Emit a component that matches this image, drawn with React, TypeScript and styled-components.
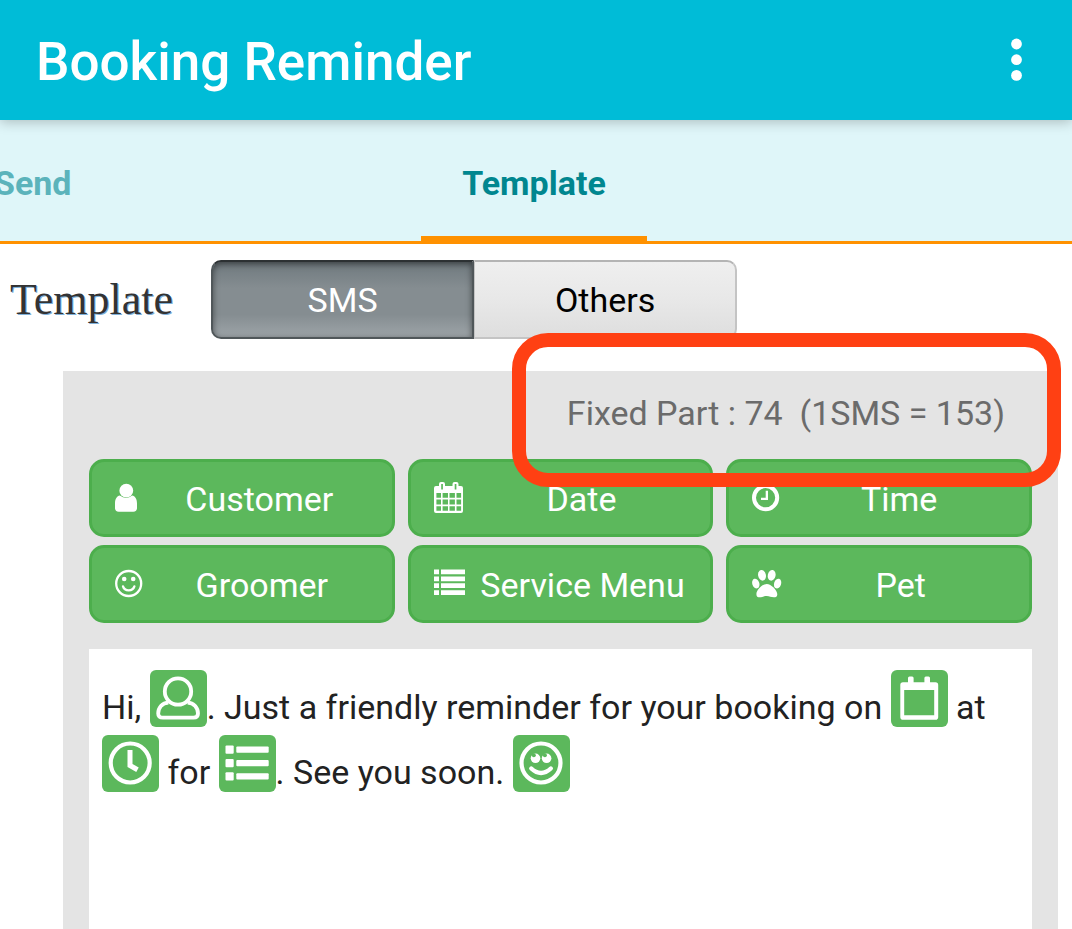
import React, { useState } from "react";
import styled, { createGlobalStyle } from "styled-components";

const GlobalStyle = createGlobalStyle`
  * { box-sizing: border-box; }
  body {
    margin: 0;
    background: #fff;
    font-family: Roboto, "Liberation Sans", sans-serif;
    font-size: 34px;
    line-height: 40px;
    overflow-x: hidden;
  }
  button { font: inherit; cursor: pointer; }
`;

const Page = styled.div`
  min-height: 100vh;
  display: flex;
  flex-direction: column;
`;

const AppBar = styled.header`
  position: relative;
  display: flex;
  align-items: center;
  justify-content: space-between;
  height: 120px;
  padding: 0 36px;
  background: #00bcd7;
  color: #fff;
  box-shadow: 0 2px 12px rgba(0, 0, 0, 0.24);
`;

const Title = styled.h1`
  margin: 0;
  padding-top: 4px;
  font-size: 53px;
  line-height: 64px;
  font-weight: 500;
`;

const MoreButton = styled.button`
  display: flex;
  padding: 0;
  border: 0;
  background: none;
  color: inherit;
`;

const Tabs = styled.nav`
  display: grid;
  grid-template-columns: 1fr auto 1fr;
  height: 124px;
  padding-right: 4px;
  border-bottom: 3px solid #ff9100;
  background: #dff6f9;
`;

const Tab = styled.a<{ $active?: boolean }>`
  display: flex;
  align-items: center;
  justify-content: center;
  height: 124px;
  padding: 10px 41px 0;
  border-bottom: 8px solid ${(p) => (p.$active ? "#ff9100" : "transparent")};
  color: ${(p) => (p.$active ? "#00868f" : "#5bb3bb")};
  font-weight: 700;
  text-decoration: none;
`;

const ScrolledTab = styled(Tab)`
  justify-self: start;
  margin-left: -47px;
`;

const TemplateRow = styled.div`
  display: flex;
  align-items: center;
  gap: 38px;
  padding: 16px 10px 0;
`;

const SectionTitle = styled.h2`
  margin: 0;
  font-family: "Liberation Serif", serif;
  font-size: 44px;
  line-height: 48px;
  font-weight: 400;
  color: #333;
  text-shadow: 1px 1px 0 #7fb0d8;
`;

const Segmented = styled.div`
  display: flex;
`;

const Segment = styled.button<{ $active: boolean }>`
  width: 263px;
  height: 79px;
  padding: 0;
  border: 2px solid ${(p) => (p.$active ? "#50575a" : "#c4c4c4")};
  border-top-color: ${(p) => (p.$active ? "#2c3133" : "#b4b4b4")};
  color: ${(p) => (p.$active ? "#fff" : "#000")};
  background: ${(p) =>
    p.$active
      ? "linear-gradient(#6f797e, #858d91 35%, #858d91 70%, #9da4a8)"
      : "linear-gradient(#efefef, #e8e8e8 50%, #dedede)"};
  box-shadow: ${(p) => (p.$active ? "inset 0 2px 6px rgba(0, 0, 0, 0.5)" : "none")};
  &:first-child { border-radius: 10px 0 0 10px; }
  &:last-child { border-radius: 0 10px 10px 0; border-left-width: 1px; }
`;

const Panel = styled.main`
  flex: 1;
  display: flex;
  flex-direction: column;
  margin: 32px 14px 0 63px;
  padding: 0 26px;
  background: #e4e4e4;
`;

const CountRow = styled.div`
  position: relative;
  display: flex;
  justify-content: flex-end;
  height: 88px;
  padding: 22px 27px 0 0;
  color: #6b6b6b;
  white-space: pre;
`;

const Highlight = styled.div`
  position: absolute;
  top: -38px;
  right: -29px;
  width: 549px;
  height: 154px;
  border: 14px solid #ff4013;
  border-radius: 36px;
  pointer-events: none;
`;

const FieldGrid = styled.div`
  display: grid;
  grid-template-columns: repeat(3, 1fr);
  gap: 8px 13px;
`;

const FieldButton = styled.button`
  display: flex;
  align-items: center;
  height: 78px;
  padding: 0 12px 0 23px;
  border: 3px solid #4cae4c;
  border-radius: 15px;
  background: #5cb85c;
  color: #fff;
  white-space: nowrap;
  svg { flex: none; }
  span { flex: 1; padding-top: 2px; text-align: center; }
`;

const Editor = styled.div`
  flex: 1;
  margin-top: 26px;
  padding: 17px 13px;
  background: #fff;
  color: #222;
  outline: none;
`;

const Chip = styled.span`
  display: inline-block;
  width: 57px;
  height: 57px;
  margin: 4px 0;
  vertical-align: -12px;
  border-radius: 6px;
  background: #5cb85c;
  color: #fff;
  svg { display: block; }
`;

type IconProps = { width: number; children: React.ReactNode };

const FieldIcon = ({ width, children }: IconProps) => (
  <svg width={width} height="34" viewBox={`0 0 ${width} 34`} fill="currentColor" aria-hidden="true">
    {children}
  </svg>
);

const ChipIcon = ({ label, children }: { label: string; children: React.ReactNode }) => (
  <Chip contentEditable={false} role="img" aria-label={label}>
    <svg width="57" height="57" viewBox="0 0 57 57" fill="currentColor">
      {children}
    </svg>
  </Chip>
);

const UserIcon = () => (
  <FieldIcon width={24}>
    <circle cx="11.3" cy="9.7" r="6.9" />
    <path d="M4.8 14.600C2 15.200 0 17.900 0 22.400v4.500q0 3.800 3.800 3.800h14.400q3.800 0 3.800-3.800v-4.500c0-4.500-2-7.200-4.800-7.800Q11.200 19.200 4.800 14.600z" />
  </FieldIcon>
);

const CalendarIcon = () => (
  <FieldIcon width={31}>
    <path
      fillRule="evenodd"
      d="M2 5H5V3q0-2 2-2h2q2 0 2 2v2h7.500V3q0-2 2-2h2q2 0 2 2v2H27q2 0 2 2v23q0 2-2 2H2q-2 0-2-2V7q0-2 2-2z
      M7.200 3v5.500h1.700V3z M20.700 3v5.500h1.700V3z
      M2.400 12v4.800H7V12z M8.600 12v4.800h5.400V12z M15.500 12v4.800h5.400V12z M22.500 12v4.800h4.600V12z
      M2.400 18.400v5.200H7v-5.200z M8.600 18.400v5.200h5.400v-5.200z M15.500 18.400v5.200h5.400v-5.200z M22.500 18.400v5.200h4.600v-5.200z
      M2.400 25.200v4.600H7v-4.600z M8.600 25.200v4.600h5.400v-4.600z M15.500 25.200v4.600h5.400v-4.600z M22.500 25.200v4.600h4.600v-4.600z"
    />
  </FieldIcon>
);

const ClockIcon = () => (
  <FieldIcon width={29}>
    <circle cx="13.6" cy="16.700" r="11.600" fill="none" stroke="currentColor" strokeWidth="4" />
    <path d="M13.700 9.800h2.300v9.300H9v-2.300h4.700z" />
  </FieldIcon>
);

const SmileIcon = () => (
  <FieldIcon width={29}>
    <g fill="none" stroke="currentColor" strokeLinecap="round">
      <circle cx="13.700" cy="16.500" r="12.500" strokeWidth="2.300" />
      <path d="M8 19.400a5.900 5.300 0 0 0 11.400 0" strokeWidth="2.300" />
    </g>
    <circle cx="9.200" cy="12" r="2.300" />
    <circle cx="18.200" cy="12" r="2.300" />
  </FieldIcon>
);

const ListIcon = () => (
  <FieldIcon width={33}>
    {[2.500, 9.400, 16.300, 23.200].map((y) => (
      <path key={y} d={`M0 ${y}h5v4.800H0z M7 ${y}h24v4.800H7z`} />
    ))}
  </FieldIcon>
);

const PawIcon = () => (
  <FieldIcon width={32}>
    <ellipse cx="10" cy="8.300" rx="3.900" ry="5.400" transform="rotate(-12 10 8.300)" />
    <ellipse cx="19.700" cy="8.300" rx="3.900" ry="5.400" transform="rotate(12 19.700 8.300)" />
    <ellipse cx="3.800" cy="16.600" rx="3.500" ry="5" transform="rotate(-18 3.800 16.600)" />
    <ellipse cx="25.600" cy="16.600" rx="3.500" ry="5" transform="rotate(18 25.600 16.600)" />
    <path d="M14.800 16.900C19 16.900 25.300 23 25.300 27.200C25.300 29.500 24 30.300 21.800 30.300C19 30.300 17.500 29 14.800 29C12 29 10.600 30.300 7.800 30.300C5.600 30.300 4.400 29.500 4.400 27.200C4.400 23 10.600 16.900 14.800 16.900z" />
  </FieldIcon>
);

const CustomerChip = () => (
  <ChipIcon label="Customer">
    <g fill="none" stroke="currentColor" strokeWidth="3.800">
      <circle cx="28" cy="21.500" r="13.200" />
      <path d="M18.500 32.600C12 32.600 8.200 38 8.200 43.500Q8.200 47.700 13 47.700H43.500Q48 47.700 48 43.500C48 38 44 32.600 37.500 32.600" />
    </g>
  </ChipIcon>
);

const DateChip = () => (
  <ChipIcon label="Date">
    <path
      fillRule="evenodd"
      d="M12 12.200h5V8q0-1.500 1.500-1.500h2.600q1.500 0 1.500 1.500v4.200h10.800V8q0-1.500 1.500-1.500h2.600q1.500 0 1.500 1.500v4.200h5.500q2.700 0 2.700 2.700v32q0 2.800-2.700 2.800H12q-2.700 0-2.700-2.800v-32q0-2.700 2.700-2.700z M13.200 20v25.200h30V20z"
    />
  </ChipIcon>
);

const TimeChip = () => (
  <ChipIcon label="Time">
    <g fill="none" stroke="currentColor">
      <circle cx="28.200" cy="28" r="19.500" strokeWidth="4.200" />
      <path d="M28 15v15.500l7.500 4.200" strokeWidth="5" />
    </g>
  </ChipIcon>
);

const ServiceChip = () => (
  <ChipIcon label="Service menu">
    {[10.600, 24, 37.300].map((y) => (
      <g key={y}>
        <rect x="6.500" y={y} width="8.200" height="8.200" rx="1" />
        <rect x="17.300" y={y + 0.9} width="32.400" height="6.300" rx="1" />
      </g>
    ))}
  </ChipIcon>
);

const SmileChip = () => (
  <ChipIcon label="Smile">
    <g fill="none" stroke="currentColor" strokeLinecap="round">
      <circle cx="28" cy="28" r="19.500" strokeWidth="4.200" />
      <path d="M18.300 33.500Q28 42.500 37.800 33.500" strokeWidth="4.400" />
    </g>
    <circle cx="22.500" cy="23.300" r="4.800" />
    <circle cx="33.600" cy="23.300" r="4.800" />
    <g fill="#5cb85c">
      <circle cx="20.800" cy="20.300" r="2" />
      <circle cx="31.900" cy="20.300" r="2" />
    </g>
  </ChipIcon>
);

const fields = [
  { name: "Customer", Icon: UserIcon },
  { name: "Date", Icon: CalendarIcon },
  { name: "Time", Icon: ClockIcon },
  { name: "Groomer", Icon: SmileIcon },
  { name: "Service Menu", Icon: ListIcon },
  { name: "Pet", Icon: PawIcon },
];

export default function App() {
  const [mode, setMode] = useState("SMS");
  return (
    <Page>
      <GlobalStyle />
      <AppBar>
        <Title>Booking Reminder</Title>
        <MoreButton aria-label="More options">
          <svg width="40" height="48" viewBox="0 0 40 48" fill="currentColor">
            <circle cx="20.500" cy="8" r="5.400" />
            <circle cx="20.500" cy="23.700" r="5.400" />
            <circle cx="20.500" cy="39.400" r="5.400" />
          </svg>
        </MoreButton>
      </AppBar>
      <Tabs>
        <ScrolledTab href="#send">Send</ScrolledTab>
        <Tab href="#template" $active aria-current="page">Template</Tab>
      </Tabs>
      <TemplateRow>
        <SectionTitle>Template</SectionTitle>
        <Segmented role="group" aria-label="Template type">
          {["SMS", "Others"].map((m) => (
            <Segment key={m} $active={mode === m} aria-pressed={mode === m} onClick={() => setMode(m)}>
              {m}
            </Segment>
          ))}
        </Segmented>
      </TemplateRow>
      <Panel>
        <CountRow>
          {"Fixed Part : 74  (1SMS = 153)"}
          <Highlight />
        </CountRow>
        <FieldGrid>
          {fields.map(({ name, Icon }) => (
            <FieldButton key={name}>
              <Icon />
              <span>{name}</span>
            </FieldButton>
          ))}
        </FieldGrid>
        <Editor
          contentEditable
          suppressContentEditableWarning
          role="textbox"
          aria-multiline="true"
          aria-label="Message template"
        >
          Hi, <CustomerChip />. Just a friendly reminder for your booking on <DateChip /> at <TimeChip /> for{" "}
          <ServiceChip />. See you soon. <SmileChip />
        </Editor>
      </Panel>
    </Page>
  );
}
